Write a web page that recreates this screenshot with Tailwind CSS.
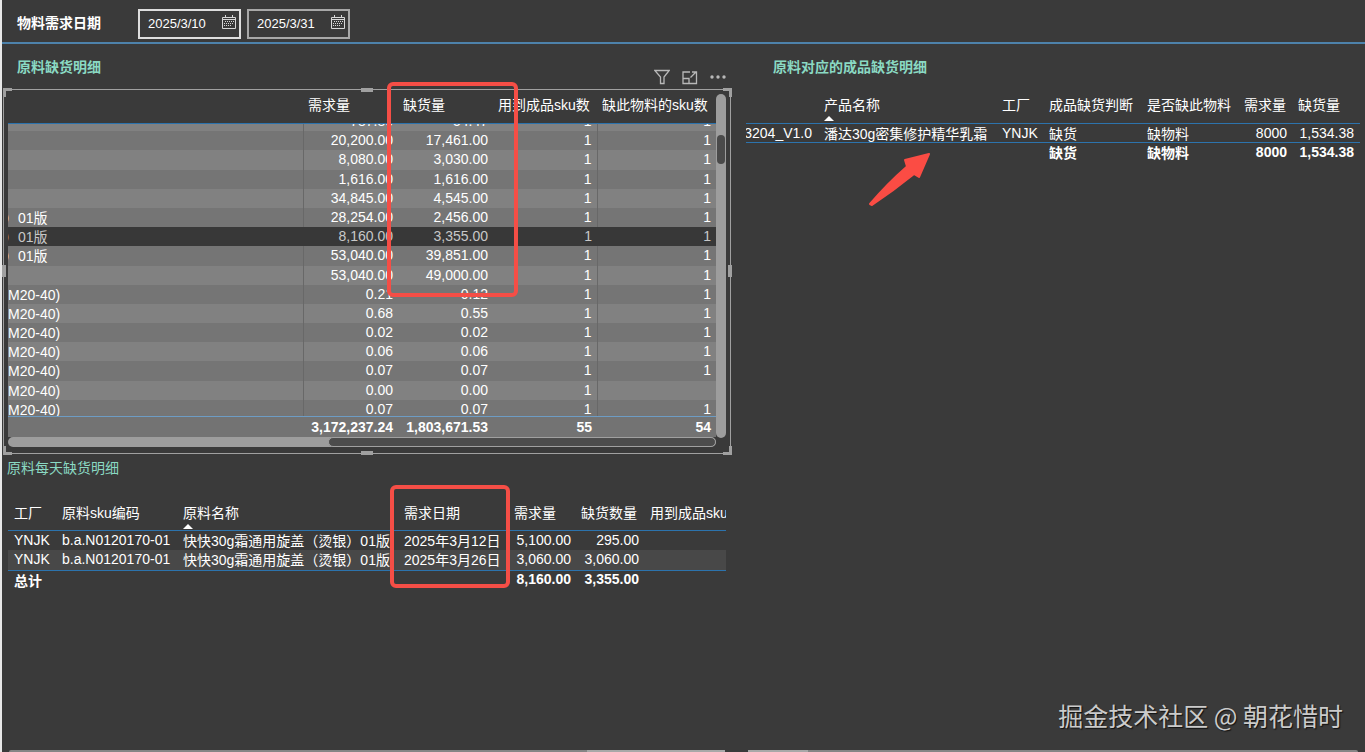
<!DOCTYPE html>
<html lang="zh-CN">
<head>
<meta charset="utf-8">
<title>物料需求</title>
<script src="https://cdn.jsdelivr.net/npm/@tailwindcss/browser@4"></script>
</head>
<body class="bg-[#3a3a3a] text-white text-sm font-['Liberation_Sans','Noto_Sans_CJK_SC',sans-serif]">
<div class="flex min-h-screen flex-col border-l-2 border-[#e8e8e8]">

  <header class="flex h-11 items-center border-b-2 border-[#4d82ab] pt-[6px] pl-[15px]">
    <h1 class="w-[121px] pb-[2px] font-bold">物料需求日期</h1>
    <div class="flex gap-[6px] text-[13px]">
      <label class="flex h-[30px] w-[103px] items-center border-2 border-[#dedede] pl-2">
        <input type="text" aria-label="开始日期" value="2025/3/10" class="w-[74px] min-w-0 bg-transparent outline-none">
        <svg class="mb-1 h-[14px] w-[14px] shrink-0" viewBox="0 0 14 14" fill="none" stroke="#d8d8d8"><path d="M.5 2.500h13v11H.5zM.5 4.500h13M3.500 0v3M10.500 0v3"/><path d="M3 6.500h9M2 8.500h10M2 10.500h8" stroke-dasharray="1 1"/></svg>
      </label>
      <label class="flex h-[30px] w-[103px] items-center border-2 border-[#a8a8a8] pl-2">
        <input type="text" aria-label="结束日期" value="2025/3/31" class="w-[74px] min-w-0 bg-transparent outline-none">
        <svg class="mb-1 h-[14px] w-[14px] shrink-0" viewBox="0 0 14 14" fill="none" stroke="#d8d8d8"><path d="M.5 2.500h13v11H.5zM.5 4.500h13M3.500 0v3M10.500 0v3"/><path d="M3 6.500h9M2 8.500h10M2 10.500h8" stroke-dasharray="1 1"/></svg>
      </label>
    </div>
  </header>

  <main class="grid flex-1 grid-cols-[744fr_619fr]">
    <div class="flex min-w-0 flex-col pr-[15px] pl-px">

      <section>
        <div class="flex h-[45px] justify-between pr-[5px] pl-[14px]">
          <h2 class="pt-[13px] font-bold text-[#8ad9c3]">原料缺货明细</h2>
          <div class="flex items-end gap-3 pb-1 text-[#b8b8b8]">
            <button aria-label="筛选"><svg class="h-4 w-4" viewBox="0 0 16 16" fill="none" stroke="currentColor" stroke-width="1.300"><path d="M.8 1.500h14.400L10 8v6.500H6.500V8z"/></svg></button>
            <button aria-label="焦点模式"><svg class="h-4 w-4" viewBox="0 0 16 16" fill="none" stroke="currentColor" stroke-width="1.300"><path d="M8 3H1v11.500h13.500V3H12M1 9.500h6v5M8.500 8.500l5-5M10 3h4.500v4.500"/></svg></button>
            <button aria-label="更多选项"><svg class="h-4 w-4" viewBox="0 0 16 16" fill="currentColor"><circle cx="2" cy="8" r="1.700"/><circle cx="8" cy="8" r="1.700"/><circle cx="14" cy="8" r="1.700"/></svg></button>
          </div>
        </div>

        <div class="relative border border-[#a0a0a0] pr-1 pb-[6px] pl-1">
          <div class="flex">
            <div class="min-w-0 flex-1">
              <div class="h-[34px] border-b border-[#2c73ad]">
                <table class="w-full table-fixed text-left">
                  <colgroup><col><col class="w-[95px]"><col class="w-[95px]"><col class="w-[104px]"><col class="w-[119px]"></colgroup>
                  <thead><tr class="align-top whitespace-nowrap">
                    <th class="pl-2"></th><th class="px-[5px] pt-[5px] font-normal">需求量</th><th class="px-[5px] pt-[5px] font-normal">缺货量</th><th class="px-[5px] pt-[5px] font-normal">用到成品sku数</th><th class="px-[5px] pt-[5px] font-normal">缺此物料的sku数</th>
                  </tr></thead>
                </table>
              </div>
              <div class="h-[292px] overflow-hidden">
                <table class="-mt-3 h-[307px] w-full table-fixed text-right">
                  <colgroup><col><col class="w-[95px]"><col class="w-[95px]"><col class="w-[104px]"><col class="w-[119px]"></colgroup>
                  <tbody id="stock"></tbody>
                </table>
              </div>
              <table class="w-full table-fixed border-t border-[#6d9cc4] bg-[#737373] text-right font-bold">
                <colgroup><col><col class="w-[95px]"><col class="w-[95px]"><col class="w-[104px]"><col class="w-[119px]"></colgroup>
                <tbody><tr class="h-5 leading-[18px]"><td></td><td class="pr-[5px]">3,172,237.24</td><td class="pr-[5px]">1,803,671.53</td><td class="pr-[5px]">55</td><td class="pr-[5px]">54</td></tr></tbody>
              </table>
              <div class="h-[10px] rounded-full bg-[#9d9d9d]"><div class="ml-auto h-full w-[388px] max-w-full rounded-full border border-[#a0a0a0] bg-[#4c4c4c]"></div></div>
            </div>
            <div class="mt-1 mb-[9px] w-[10px] rounded-full bg-[#9d9d9d] pt-[41px]"><div class="mx-px h-[29px] rounded-full bg-[#4a4a4a]"></div></div>
          </div>
          <i class="absolute -top-[2px] -left-px h-[9px] w-[9px] border-t-3 border-l-3 border-[#a0a0a0]"></i>
          <i class="absolute -top-[2px] -right-[2px] h-[9px] w-[9px] border-t-3 border-r-3 border-[#a0a0a0]"></i>
          <i class="absolute -bottom-[2px] -left-px h-[9px] w-[9px] border-b-3 border-l-3 border-[#a0a0a0]"></i>
          <i class="absolute -right-[2px] -bottom-[2px] h-[9px] w-[9px] border-r-3 border-b-3 border-[#a0a0a0]"></i>
          <i class="absolute -top-[2px] left-1/2 h-1 w-3 -translate-x-1/2 bg-[#a0a0a0]"></i>
          <i class="absolute -bottom-[2px] left-1/2 h-1 w-3 -translate-x-1/2 bg-[#a0a0a0]"></i>
          <i class="absolute top-1/2 -left-[2px] h-3 w-1 -translate-y-1/2 bg-[#a0a0a0]"></i>
          <i class="absolute top-1/2 -right-[2px] h-3 w-1 -translate-y-1/2 bg-[#a0a0a0]"></i>
          <div class="absolute -top-2 right-[212px] h-[215px] w-[131px] rounded-md border-4 border-[#f54e46]"></div>
        </div>
      </section>

      <section class="pl-1">
        <h2 class="pt-[3px] leading-[22px] text-[#8ad9c3]">原料每天缺货明细</h2>
        <div class="relative mt-6 mr-[5px] ml-px">
          <div class="overflow-hidden">
            <table class="w-full table-fixed text-left whitespace-nowrap">
              <colgroup><col class="w-[48px]"><col class="w-[121px]"><col><col class="w-[111px]"><col class="w-[67px]"><col class="w-[68px]"><col class="w-[82px]"></colgroup>
              <thead><tr class="h-7 border-b border-[#2c73ad] align-top">
                <th class="pl-[6px] font-normal">工厂</th><th class="pl-[6px] font-normal">原料sku编码</th>
                <th class="pl-[6px] font-normal" aria-sort="ascending">原料名称<svg class="mt-px h-[5px] w-[10px]" viewBox="0 0 10 5" fill="#fff"><path d="M0 5l5-5 5 5z"/></svg></th>
                <th class="pl-[6px] font-normal">需求日期</th><th class="pl-[5px] font-normal">需求量</th><th class="pl-[5px] font-normal">缺货数量</th><th class="overflow-hidden pl-[6px] font-normal">用到成品sku数</th>
              </tr></thead>
              <tbody class="leading-[18px]">
                <tr class="h-[19px] align-top"><td class="pl-[6px]">YNJK</td><td class="pl-[6px]">b.a.N0120170-01</td><td class="overflow-hidden pt-[2px] pl-[6px] leading-[17px]">快快30g霜通用旋盖（烫银）01版</td><td class="pt-[2px] pl-[6px] leading-[17px]">2025年3月12日</td><td class="pr-[5px] text-right">5,100.00</td><td class="pr-[5px] text-right">295.00</td><td></td></tr>
                <tr class="h-5 border-b border-[#2c73ad] bg-[#484848] align-top"><td class="pl-[6px]">YNJK</td><td class="pl-[6px]">b.a.N0120170-01</td><td class="overflow-hidden pt-[2px] pl-[6px] leading-[17px]">快快30g霜通用旋盖（烫银）01版</td><td class="pt-[2px] pl-[6px] leading-[17px]">2025年3月26日</td><td class="pr-[5px] text-right">3,060.00</td><td class="pr-[5px] text-right">3,060.00</td><td></td></tr>
              </tbody>
              <tfoot class="leading-[17px] font-bold"><tr class="h-[19px] align-top"><td class="pt-[2px] pl-[6px]">总计</td><td></td><td></td><td></td><td class="pr-[5px] text-right">8,160.00</td><td class="pr-[5px] text-right">3,355.00</td><td></td></tr></tfoot>
            </table>
          </div>
          <div class="absolute -top-[18px] right-[216px] h-[103px] w-[120px] rounded-md border-4 border-[#f54e46]"></div>
        </div>
      </section>
      <div class="mt-auto mr-[6px] ml-[6px] flex h-[2px] rounded-t-full bg-[#858585]"><div class="ml-auto w-[138px] bg-[#a8a8a8]"></div></div>
    </div>

    <section class="relative flex min-w-0 flex-col pr-[5px]">
      <h2 class="h-[45px] pt-[13px] pl-[27px] font-bold text-[#8ad9c3]">原料对应的成品缺货明细</h2>
      <table class="w-full table-fixed text-left whitespace-nowrap">
        <colgroup><col class="w-[72px]"><col><col class="w-[47px]"><col class="w-[98px]"><col class="w-[97px]"><col class="w-[54px]"><col class="w-[68px]"></colgroup>
        <thead><tr class="h-[34px] border-b border-[#2c73ad] align-top">
          <th></th><th class="pt-[6px] pl-[6px] font-normal" aria-sort="ascending">产品名称<svg class="mt-px h-[5px] w-[10px]" viewBox="0 0 10 5" fill="#fff"><path d="M0 5l5-5 5 5z"/></svg></th>
          <th class="pt-[6px] pl-[6px] font-normal">工厂</th><th class="pt-[6px] pl-[6px] font-normal">成品缺货判断</th><th class="pt-[6px] pl-[6px] font-normal">是否缺此物料</th><th class="pt-[6px] pl-[6px] font-normal">需求量</th><th class="pt-[6px] pl-[6px] font-normal">缺货量</th>
        </tr></thead>
        <tbody class="leading-[18px]"><tr class="h-[19px] border-b border-[#2c73ad] align-top">
          <td><div class="flex justify-end overflow-hidden pr-[6px]">3204_V1.0</div></td><td class="pt-[2px] pl-[6px] leading-4">潘达30g密集修护精华乳霜</td><td class="pl-[6px]">YNJK</td><td class="pt-[2px] pl-[6px] leading-4">缺货</td><td class="pt-[2px] pl-[6px] leading-4">缺物料</td><td class="pr-[5px] text-right">8000</td><td class="pr-[6px] text-right">1,534.38</td>
        </tr></tbody>
        <tfoot class="leading-[18px] font-bold"><tr class="h-[19px] align-top">
          <td></td><td></td><td></td><td class="pt-[2px] pl-[6px] leading-4">缺货</td><td class="pt-[2px] pl-[6px] leading-4">缺物料</td><td class="pr-[5px] text-right">8000</td><td class="pr-[6px] text-right">1,534.38</td>
        </tr></tfoot>
      </table>
      <svg class="absolute top-[107px] left-[121px] h-14 w-16" viewBox="0 0 64 56" fill="#fb4c44" stroke="#fb4c44" stroke-width="2" stroke-linejoin="round"><path d="M62 3L38 9l2 6.500Q20 33 3 53l2 1Q26 40 47 23l5 3z"/></svg>
      <p class="mt-auto mr-[17px] mb-[17px] self-end text-[25px] leading-9 whitespace-nowrap text-[#cbcbcb] font-['Noto_Sans_CJK_SC',sans-serif] [text-shadow:1px_1px_1px_#111]">掘金技术社区 @ 朝花惜时</p>
      <div class="mr-[2px] ml-[2px] h-[2px] rounded-t-full bg-[#858585]"><div class="h-full w-[60px] bg-[#a8a8a8]"></div></div>
    </section>
  </main>
</div>
<script>
const rows = [
  ['', '787.80', '54.47', '1', '1'],
  ['', '20,200.00', '17,461.00', '1', '1'],
  ['', '8,080.00', '3,030.00', '1', '1'],
  ['', '1,616.00', '1,616.00', '1', '1'],
  ['', '34,845.00', '4,545.00', '1', '1'],
  ['）01版', '28,254.00', '2,456.00', '1', '1'],
  ['）01版', '8,160.00', '3,355.00', '1', '1'],
  ['）01版', '53,040.00', '39,851.00', '1', '1'],
  ['', '53,040.00', '49,000.00', '1', '1'],
  ['M20-40)', '0.21', '0.12', '1', '1'],
  ['M20-40)', '0.68', '0.55', '1', '1'],
  ['M20-40)', '0.02', '0.02', '1', '1'],
  ['M20-40)', '0.06', '0.06', '1', '1'],
  ['M20-40)', '0.07', '0.07', '1', '1'],
  ['M20-40)', '0.00', '0.00', '1', ''],
  ['M20-40)', '0.07', '0.07', '1', '1']
];
document.getElementById('stock').innerHTML = rows.map((r, i) => {
  const selected = i === 6;
  const tone = selected ? 'bg-[#383838] text-[#c8c8c8]' : i % 2 ? 'bg-[#757575]' : 'bg-[#818181]';
  const line = selected ? '' : 'border-r border-[#686868]';
  const name = r[0] === '）01版' ? '-indent-1' : '';
  return `<tr class="h-[19px] ${tone} align-top leading-[18px]">
    <td class="overflow-hidden pt-[2px] text-left leading-[17px] ${name} ${line}">${r[0]}</td>
    <td class="pr-[5px]">${r[1]}</td><td class="pr-[5px]">${r[2]}</td>
    <td class="pr-[5px] ${line}">${r[3]}</td><td class="pr-[5px]">${r[4]}</td></tr>`;
}).join('');
</script>
</body>
</html>
